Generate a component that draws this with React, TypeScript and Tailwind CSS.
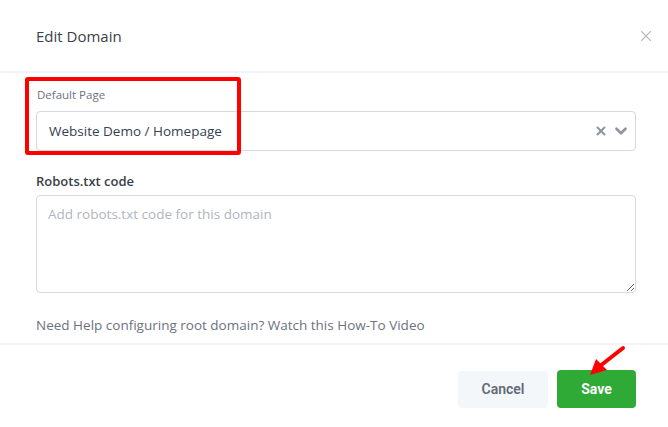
import { X, ChevronDown } from 'lucide-react';

export default function App() {
  return (
    <div
      className="relative w-[668px] h-[427px] bg-white overflow-hidden"
      style={{ fontFamily: '"Open Sans", "Noto Sans", sans-serif' }}
    >
      {/* header */}
      <div className="flex items-center justify-between h-[73px] pl-9 pr-[13px] pt-[1px] border-b-2 border-[#f1f4f8]">
        <span className="text-[15px] text-[#3a3f47]">Edit Domain</span>
        <X className="w-[18px] h-[18px] text-[#b5bcc4]" strokeWidth={1.5} />
      </div>

      {/* body */}
      <div className="pl-9 pr-8 pt-[14px] pb-[10px]">
        <div className="text-[11.5px] text-[#6b7280] leading-4 pl-px">Default Page</div>
        <div className="mt-[8px] flex items-center h-[40px] border border-[#d5d9df] rounded-[4px] pl-[12px] pr-[5px]">
          <span className="flex-1 text-[13.5px] text-[#374151]">Website Demo / Homepage</span>
          <X className="w-[14px] h-[14px] text-[#8f959c]" strokeWidth={3.5} />
          <ChevronDown className="ml-[4px] w-[18px] h-[18px] text-[#8f959c]" strokeWidth={3.5} />
        </div>

        <div className="mt-[20px] text-[13px] font-semibold text-[#3a3f47] leading-5">Robots.txt code</div>
        <textarea
          className="mt-[4px] block w-full h-[98px] border border-[#d5d9df] rounded-[4px] px-[11px] py-[8px] text-[13.5px] placeholder:text-[#b0b6bd] outline-none resize-y"
          placeholder="Add robots.txt code for this domain"
        />

        <div className="mt-[22px] text-[13.5px] text-[#6b7280] leading-5">
          Need Help configuring root domain? Watch this How-To Video
        </div>
      </div>

      {/* footer */}
      <div className="-mt-[2px] border-t-2 border-[#f1f4f8] flex justify-end items-center gap-[9px] pr-[32px] pt-[25px]">
        <button
          className="w-[90px] h-[37px] rounded-[4px] bg-[#f4f7fa] text-[14px] font-semibold text-[#5f6b76]"
          style={{ fontFamily: 'Roboto, "Open Sans", sans-serif' }}
        >
          Cancel
        </button>
        <button
          className="w-[79px] h-[38px] rounded-[4px] bg-[#2faa37] text-[14px] font-bold text-white"
          style={{ fontFamily: 'Roboto, "Open Sans", sans-serif' }}
        >
          Save
        </button>
      </div>

      {/* annotation: red highlight box */}
      <div className="absolute left-[25px] top-[77px] w-[216px] h-[78px] border-[4px] border-[#ff0000] rounded-[3px] pointer-events-none" />

      {/* annotation: red arrow */}
      <svg className="absolute left-[580px] top-[342px]" width="50" height="40" viewBox="0 0 50 40">
        <line x1="43" y1="6" x2="20" y2="24" stroke="#ff0000" strokeWidth="4" strokeLinecap="round" />
        <polygon points="10,33 16,17 27,28" fill="#ff0000" />
      </svg>
    </div>
  );
}
